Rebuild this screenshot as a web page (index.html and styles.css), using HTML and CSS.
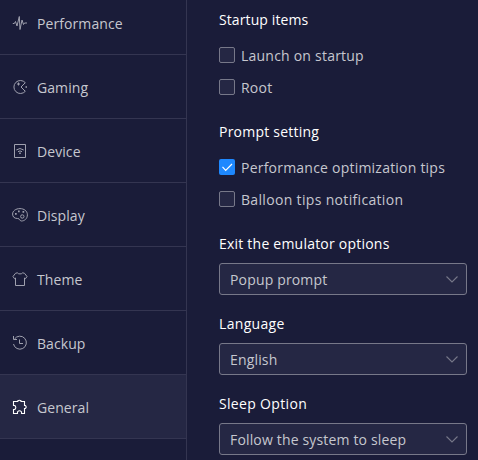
FILE: index.html
```html
<!DOCTYPE html>
<html lang="en">
<head>
<meta charset="utf-8">
<title>Settings</title>
<link rel="stylesheet" href="styles.css">
</head>
<body>
<div class="settings">
  <nav class="sidebar">
    <a class="nav-item"><svg class="icon" viewBox="0 0 16 16"><path d="M.8 8.500h1.500L3.500 6.500l1.500 4.500L7.300 1.500 8 14.500 10 5l1.500 4.500 1-1.500H15"/></svg><span>Performance</span></a>
    <a class="nav-item"><svg class="icon" viewBox="0 0 16 16"><path d="M13.300 3.700A6.500 6.500 0 1 0 13.300 12.300L9 8z M6.500 3.500v3M5 5h3"/><path class="solid" d="M13.500 7.200H15v1.500h-1.500z"/></svg><span>Gaming</span></a>
    <a class="nav-item"><svg class="icon" viewBox="0 0 16 16"><path d="M2.500 1.500h11v13h-11zM4.300 7q3.700-3 7.400 0M6 8.700q2-1.600 4 0"/><path class="solid" d="M7.200 9.500h1.600V11H7.200z"/></svg><span>Device</span></a>
    <a class="nav-item"><svg class="icon" viewBox="0 0 16 16"><path d="M5.500 11.500C2 11.500.6 9.500.6 7c0-3 3-5.400 7.400-5.400 4 0 7.400 2.400 7.400 6.200 0 4-3 6.200-6 6.200-2 0-1-2.500-3.900-2.500z"/><circle cx="10.300" cy="9.500" r="1.700"/><path class="solid" d="M3 6h1.700v1.700H3zM6 3.500h1.700v1.700H6zM10.500 4h1.700v1.700h-1.700z"/></svg><span>Display</span></a>
    <a class="nav-item"><svg class="icon" viewBox="0 0 16 16"><path d="M5.300 1.800L3.500 2.300 1 5.500l1.500 2.200 1-.7v7.500h9V7l1 .7L15 5.500l-2.500-3.200-1.800-.5C10 3.300 6 3.300 5.300 1.800z"/></svg><span>Theme</span></a>
    <a class="nav-item"><svg class="icon" viewBox="0 0 16 16"><path d="M2.500 4A6.500 6.500 0 1 1 1.500 9M1.500 1v3.500H5M7.500 4.500v4H11"/></svg><span>Backup</span></a>
    <a class="nav-item active"><svg class="icon" viewBox="0 0 16 16"><path d="M1.500 2.500h4.300V1.700q1.700-1 3.200 0v.8h3.500v4h.8q1.800 1.500 0 3h-.8v5h-3v-1.700q-2-2-4 0v1.700h-4V10.500h1.300q2-2 0-4H1.500z"/></svg><span>General</span></a>
  </nav>
  <main class="content">
    <section class="group">
      <h2 class="snug">Startup items</h2>
      <label class="check"><span class="box"></span><span class="label">Launch on startup</span></label>
      <label class="check"><span class="box"></span><span class="label">Root</span></label>
    </section>
    <section class="group">
      <h2>Prompt setting</h2>
      <label class="check"><span class="box checked"><svg viewBox="0 0 16 16"><path d="M3.500 7.800l3.200 3.500L13 5"/></svg></span><span class="label">Performance optimization tips</span></label>
      <label class="check"><span class="box"></span><span class="label loose">Balloon tips notification</span></label>
    </section>
    <section class="group">
      <h2>Exit the emulator options</h2>
      <div class="select"><span>Popup prompt</span><svg class="chevron" viewBox="0 0 12 7"><path d="M.5.5L6 6 11.500.5"/></svg></div>
    </section>
    <section class="group">
      <h2 class="loose">Language</h2>
      <div class="select"><span>English</span><svg class="chevron" viewBox="0 0 12 7"><path d="M.5.5L6 6 11.500.5"/></svg></div>
    </section>
    <section class="group">
      <h2 class="loose">Sleep Option</h2>
      <div class="select"><span>Follow the system to sleep</span><svg class="chevron" viewBox="0 0 12 7"><path d="M.5.5L6 6 11.500.5"/></svg></div>
    </section>
  </main>
</div>
</body>
</html>
```
FILE: styles.css
```css
* { box-sizing: border-box; }
body {
  margin: 0;
  background: #1a1c39;
  color: #c6c7cf;
  font: 14px/20px "Open Sans", "Noto Sans", sans-serif;
}
.settings { display: flex; height: 460px; overflow: hidden; }
.sidebar { width: 187px; flex: none; border-right: 1px solid #343551; }
.nav-item {
  display: flex;
  align-items: center;
  gap: 9px;
  height: 64px;
  padding-left: 12px;
  border-bottom: 1px solid #343551;
}
.nav-item:first-child { margin-top: -9px; }
.nav-item span { padding-top: 2px; letter-spacing: .08px; }
.active { background: #252744; }
.icon { width: 16px; height: 16px; fill: none; stroke: #9fa0ae; stroke-width: 1; }
.icon .solid { fill: #9fa0ae; stroke: none; }
.active .icon { stroke: #fff; stroke-width: 1.1; }
.content { flex: 1; padding: 4px 11px 0 32px; }
.group { margin-bottom: 13px; }
h2 {
  margin: 0 0 3px;
  font-size: 14px;
  font-weight: 400;
  line-height: 32px;
  letter-spacing: .22px;
  color: #fff;
}
.check { display: flex; align-items: center; gap: 6px; height: 32px; }
.label { padding-top: 2px; letter-spacing: .22px; }
.snug { letter-spacing: .1px; }
.loose { letter-spacing: .33px; }
.box { width: 16px; height: 16px; flex: none; border: 1px solid #777889; border-radius: 2px; background: #252744; }
.checked { border: 0; background: #1e88ff; }
.box svg { display: block; fill: none; stroke: #fff; stroke-width: 1.2; }
.select {
  display: flex;
  align-items: center;
  justify-content: space-between;
  height: 32px;
  padding: 0 8px 0 10px;
  border: 1px solid #777889;
  border-radius: 3px;
  background: #252744;
}
.select span { padding-top: 2px; letter-spacing: .16px; }
.chevron { width: 12px; height: 7px; fill: none; stroke: #777889; stroke-width: 1.1; }
```
